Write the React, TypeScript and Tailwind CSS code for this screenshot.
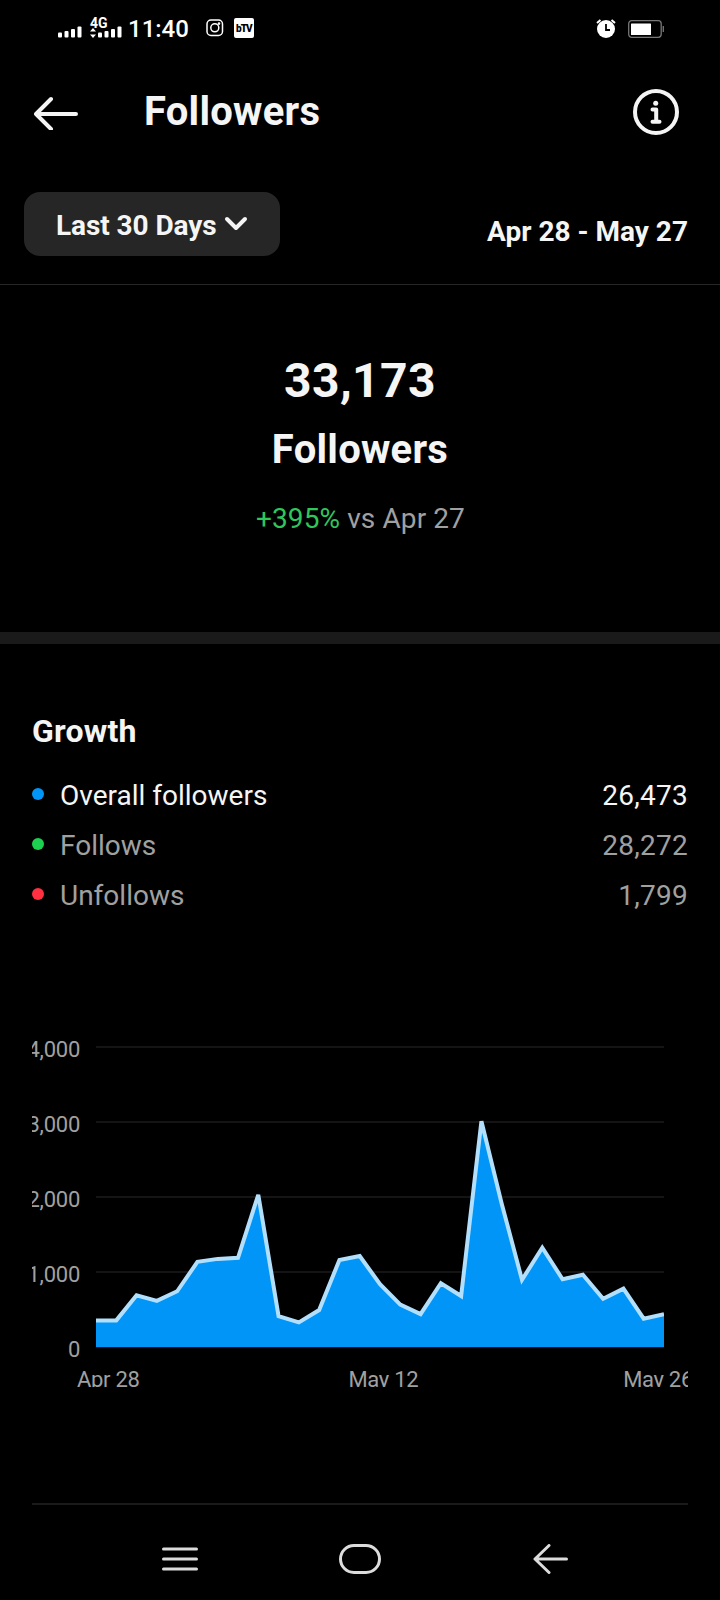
import { ReactNode } from "react";

const LEGEND = [
    { id: "overall", label: "Overall followers", value: "26,473", dot: "bg-[#0095f6]", text: "text-[#f5f5f5]" },
    { id: "follows", label: "Follows", value: "28,272", dot: "bg-[#1cd14f]", text: "text-[#a0a0a0]" },
    { id: "unfollows", label: "Unfollows", value: "1,799", dot: "bg-[#ff3040]", text: "text-[#a0a0a0]" },
];

// Daily net followers, Apr 28 to May 26
const DAILY = [
    355, 355, 690, 615, 743, 1135, 1175, 1190, 2030, 412, 328, 493, 1160, 1213, 838, 565, 438, 850, 680, 3010,
    1910, 895, 1325, 903, 964, 644, 778, 378, 436,
];

const Y_LABELS = ["4,000", "3,000", "2,000", "1,000", "0"];

const CHART_WIDTH = 568;
const CHART_HEIGHT = 300;
const MAX_VALUE = 4000;

const points = DAILY.map((value, i) => {
    const x = (i * CHART_WIDTH) / (DAILY.length - 1);
    const y = CHART_HEIGHT - (value / MAX_VALUE) * CHART_HEIGHT;
    return `${x.toFixed(2)},${y.toFixed(2)}`;
}).join(" ");

function SignalBars() {
    return (
        <svg className="shrink-0" width="24" height="12" viewBox="0 0 24 12" fill="#fff">
            <rect x="0" y="6.5" width="4" height="5" rx="1" />
            <rect x="6.5" y="5" width="4" height="6.5" rx="1" />
            <rect x="13" y="3" width="4" height="8.5" rx="1" />
            <rect x="19.5" y="0.5" width="4" height="11" rx="1" />
        </svg>
    );
}

function StatusBar() {
    return (
        <div className="flex h-14 items-start justify-between pt-4 pr-14 pl-[58px]">
            <div className="flex h-6 items-start">
                <div className="flex h-[22px] items-end">
                    <SignalBars />
                </div>
                <div className="ml-2 h-[22px] w-8">
                    <div className="h-[10px] text-[14px] leading-[15px] font-bold text-white">4G</div>
                    <div className="flex h-3 items-end gap-0.5">
                        <svg className="shrink-0" width="6" height="11" viewBox="0 0 6 11" fill="#fff">
                            <path d="M3 1 6 4.500H0ZM3 11 0 7.500h6Z" />
                        </svg>
                        <SignalBars />
                    </div>
                </div>
                <span className="ml-1.5 text-2xl leading-[26px] font-medium text-white">11:40</span>
                <svg className="mt-[3px] ml-[17px]" width="18" height="18" viewBox="0 0 18 18" fill="none" stroke="#fff" strokeWidth="1.5">
                    <rect x="1" y="1" width="15.5" height="15.5" rx="4" />
                    <circle cx="8.8" cy="8.8" r="4" />
                    <circle cx="13" cy="4.6" r="0.6" fill="#fff" />
                </svg>
                <div className="mt-0.5 ml-2.5 flex size-5 items-center justify-center rounded-[2px] bg-white text-[10px] font-black tracking-[-1px] text-black">
                    bTV
                </div>
            </div>
            <div className="flex items-center gap-3 pt-[3px]">
                <svg width="20" height="20" viewBox="0 0 20 20">
                    <circle cx="10" cy="10" r="9" fill="#fff" />
                    <path d="M1 4 4.500 1M19 4l-3.500-3" stroke="#fff" strokeWidth="2" />
                    <path d="M10 5v6h4" fill="none" stroke="#000" strokeWidth="1.800" />
                </svg>
                <svg width="36" height="18" viewBox="0 0 36 18">
                    <rect x="0.700" y="0.700" width="32.500" height="16.600" rx="3" fill="none" stroke="#777" strokeWidth="1.300" />
                    <rect x="3" y="3.500" width="20" height="11.500" rx="0.500" fill="#fff" />
                    <path d="M35.300 6v6" stroke="#777" strokeWidth="1.300" />
                </svg>
            </div>
        </div>
    );
}

function Header() {
    return (
        <header className="flex h-[112px] items-center pr-10 pl-[34px]">
            <svg width="45" height="36" viewBox="0 0 45 36" fill="none" stroke="#f5f5f5" strokeWidth="4" strokeLinecap="round" strokeLinejoin="round">
                <path d="M42 20H2M17 5 2 20l15 15" />
            </svg>
            <h1 className="ml-[65px] text-[40px] leading-[48px] font-bold tracking-[0.25px]">Followers</h1>
            <svg className="ml-auto" width="48" height="48" viewBox="0 0 48 48" fill="none" stroke="#f5f5f5" strokeLinecap="round" strokeLinejoin="round">
                <circle cx="24" cy="24" r="21" strokeWidth="4" />
                <circle cx="23.700" cy="15.300" r="2.500" fill="#f5f5f5" stroke="none" />
                <path d="M20.500 21.500h3.700v12M20.500 33.700h7" strokeWidth="4" />
            </svg>
        </header>
    );
}

function Row({ children }: { children: ReactNode }) {
    return <div className="flex h-[50px] items-center text-[28px] leading-[50px]">{children}</div>;
}

function GrowthChart() {
    return (
        <div className="flex h-[370px] w-[656px] flex-col overflow-hidden">
            <div className="flex h-[331px] shrink-0">
                <div className="flex w-12 shrink-0 flex-col items-end">
                    {Y_LABELS.map((label) => (
                        <div key={label} className="h-[75px] shrink-0 text-[22px] leading-[66px] tracking-[-0.25px] text-[#a0a0a0]">
                            {label}
                        </div>
                    ))}
                </div>
                <svg className="mt-[29px] ml-4 shrink-0 overflow-hidden" width={CHART_WIDTH} height={CHART_HEIGHT + 2} viewBox={`0 -1 ${CHART_WIDTH} ${CHART_HEIGHT + 2}`}>
                    {Y_LABELS.map((label, i) => (
                        <path key={label} d={`M0 ${i * 75}H${CHART_WIDTH}`} stroke="#141414" strokeWidth="2" />
                    ))}
                    <polygon points={`0,${CHART_HEIGHT} ${points} ${CHART_WIDTH},${CHART_HEIGHT}`} fill="#0095f6" />
                    <polyline points={points} fill="none" stroke="#b2dffc" strokeWidth="4" strokeLinejoin="miter" />
                </svg>
            </div>
            <div className="mt-4 flex shrink-0 justify-between pl-[45px] text-[22px] leading-8 tracking-[-0.3px] whitespace-nowrap text-[#a0a0a0]">
                <span>Apr 28</span>
                <span className="-mr-1 ml-0">May 12</span>
                <span className="-mr-[5px]">May 26</span>
            </div>
        </div>
    );
}

function NavBar() {
    return (
        <nav className="flex h-[95px] items-center gap-[141px] pt-[13px] pl-[162px]">
            <svg width="36" height="24" viewBox="0 0 36 24" stroke="#dcdcdc" strokeWidth="3" strokeLinecap="round">
                <path d="M1.500 2h33M1.500 12h33M1.500 22h33" />
            </svg>
            <svg width="42" height="30" viewBox="0 0 42 30" fill="none" stroke="#dcdcdc" strokeWidth="3">
                <rect x="1.500" y="1.500" width="39" height="27" rx="13.500" />
            </svg>
            <svg className="ml-[11px]" width="35" height="30" viewBox="0 0 35 30" fill="none" stroke="#dcdcdc" strokeWidth="3" strokeLinecap="round" strokeLinejoin="round">
                <path d="M33.500 15H2M16 1.500 2 15l14 13.500" />
            </svg>
        </nav>
    );
}

export default function App() {
    return (
        <div className="flex h-[1600px] w-[720px] flex-col overflow-hidden bg-black font-[Roboto,sans-serif] text-[#f5f5f5]">
            <StatusBar />
            <Header />

            {/* Date range */}
            <div className="flex h-[117px] items-start justify-between border-b border-[#262626] pt-6 pr-8 pl-6 text-[28px] font-bold">
                <button className="flex h-16 w-64 items-center rounded-2xl bg-[#262626] pl-8">
                    <span className="pt-1 leading-[66px] tracking-[-0.08px]">Last 30 Days</span>
                    <svg className="ml-[7px]" width="24" height="16" viewBox="0 0 24 16" fill="none" stroke="#f5f5f5" strokeWidth="4" strokeLinecap="round" strokeLinejoin="round">
                        <path d="m3 3 9 9 9-9" />
                    </svg>
                </button>
                <span className="pt-6 leading-8">Apr 28 - May 27</span>
            </div>

            {/* Summary */}
            <section className="flex h-[359px] flex-col items-center border-b-[12px] border-[#1a1a1a] pt-[66px]">
                <div className="text-5xl leading-[60px] font-bold tracking-[0.4px]">33,173</div>
                <h2 className="mt-[9px] text-[40px] leading-[60px] font-bold tracking-[0.25px]">Followers</h2>
                <p className="mt-[19px] pl-px text-[28px] leading-10 tracking-[0.1px] text-[#a0a0a0]">
                    <span className="text-[#2fc65b]">+395%</span> vs Apr 27
                </p>
            </section>

            {/* Growth */}
            <section className="mx-8 flex h-[861px] flex-col border-b-2 border-[#1a1a1a] pt-[67px]">
                <h3 className="text-[32px] leading-10 font-bold tracking-[0.2px]">Growth</h3>
                <div className="mt-5">
                    {LEGEND.map((item) => (
                        <Row key={item.id}>
                            <span className={`mb-1 size-3 rounded-full ${item.dot}`} />
                            <span className={`ml-4 ${item.text}`}>{item.label}</span>
                            <span className={`ml-auto tracking-[0.25px] ${item.text}`}>{item.value}</span>
                        </Row>
                    ))}
                </div>
                <div className="mt-24">
                    <GrowthChart />
                </div>
            </section>

            <NavBar />
        </div>
    );
}
